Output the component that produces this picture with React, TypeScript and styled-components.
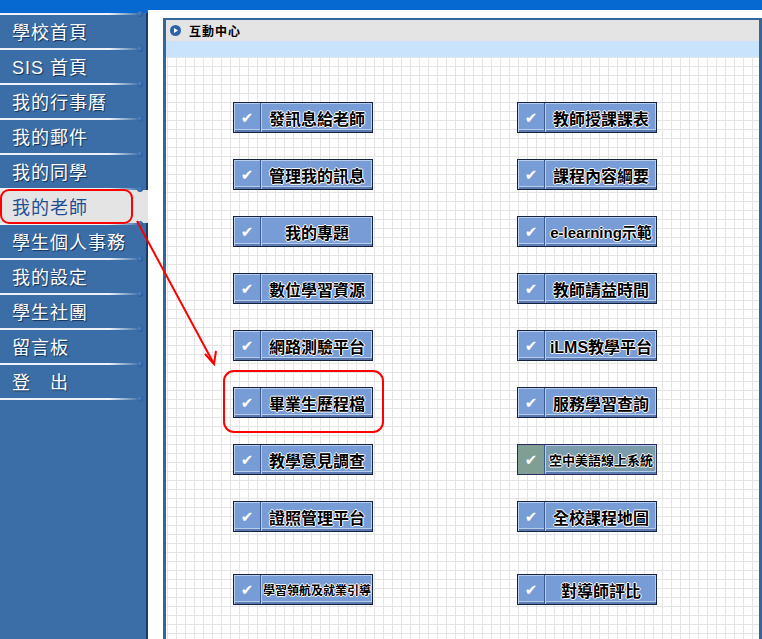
import React from "react";
import styled, { createGlobalStyle } from "styled-components";

const GlobalStyle = createGlobalStyle`
  html, body {
    margin: 0;
    padding: 0;
    background: #fff;
  }
  body {
    font-family: "Liberation Sans", "Noto Sans CJK TC", sans-serif;
  }
`;

const Page = styled.div`
  position: relative;
  width: 762px;
  height: 639px;
  overflow: hidden;
  display: flex;
  flex-direction: column;
`;
const TopBar = styled.div`
  height: 10px;
  flex-shrink: 0;
  background: #0668d1;
`;
const Body = styled.div`
  display: flex;
  flex: 1;
  min-height: 0;
`;
const Sidebar = styled.nav`
  width: 148px;
  flex-shrink: 0;
  padding-top: 3px;
  background: linear-gradient(#0668d1, #0668d1) top / 100% 3px no-repeat,
    linear-gradient(to left, #173c6c 0, #173c6c 2px, #3b6ea6 2px);
`;
const Divider = styled.div`
  position: relative;
  width: 140px;
  height: 2px;
  background: linear-gradient(to right, #eef3fa 0, #eef3fa 78%, #3b6ea6 100%);
  &::after {
    content: "";
    position: absolute;
    right: -3px;
    top: -2px;
    width: 6px;
    height: 6px;
    border-radius: 50%;
    background: radial-gradient(circle at 40% 40%, #4d87c9, #1b4a88);
  }
`;
const Item = styled.div<{ $active?: boolean }>`
  box-sizing: border-box;
  height: 33px;
  display: flex;
  align-items: center;
  padding: 0 0 2px 12px;
  font-size: 18px;
  letter-spacing: 1px;
  white-space: pre;
  color: ${(p) => (p.$active ? "#1f4f93" : "#fff")};
  background: ${(p) => (p.$active ? "#e4e4e4" : "transparent")};
  text-shadow: ${(p) => (p.$active ? "none" : "1px 1px 1px #12315a")};
`;

const Main = styled.main`
  flex: 1;
  min-width: 0;
  padding: 8px 0 0 15px;
`;
const Panel = styled.section`
  height: 100%;
  box-sizing: border-box;
  border: 3px solid #336699;
  border-top-width: 2px;
  border-bottom: none;
  display: flex;
  flex-direction: column;
`;
const PanelHeader = styled.header`
  height: 21px;
  flex-shrink: 0;
  display: flex;
  align-items: center;
  gap: 8px;
  padding-left: 4px;
  background: #e4e4e4;
  font-size: 12px;
  font-weight: bold;
  letter-spacing: 1px;
  color: #000;
`;
const SubHeader = styled.div`
  height: 16px;
  flex-shrink: 0;
  background: #c9e3fd;
`;
const GridArea = styled.div`
  flex: 1;
  padding: 45px 0 0 67px;
  background-color: #fff;
  background-image: linear-gradient(to right, #e4e4e4 1px, transparent 1px),
    linear-gradient(to bottom, #e4e4e4 1px, transparent 1px);
  background-size: 9px 9px;
  background-position: 1px 0;
  display: grid;
  grid-template-columns: 140px 140px;
  grid-auto-rows: min-content;
  column-gap: 144px;
  row-gap: 26px;
  align-content: start;
`;
const Btn = styled.button<{ $alt?: boolean; $late?: boolean }>`
  all: unset;
  box-sizing: border-box;
  width: 140px;
  height: 31px;
  display: flex;
  cursor: pointer;
  margin-top: ${(p) => (p.$late ? "16px" : "0")};
  border: 1px solid ${(p) => (p.$alt ? "#2b2a5c" : "#16233f")};
  background: ${(p) => (p.$alt ? "#7b9cab" : "#789dd6")};
  box-shadow: inset 1px 1px 0 #b8ccee, inset 0 -2px 0 #5b7bb0,
    inset 0 -3px 0 #b8ccee, inset -1px 0 0 #b8ccee;
`;
const CheckCell = styled.span<{ $alt?: boolean }>`
  width: 26px;
  flex-shrink: 0;
  display: flex;
  align-items: center;
  justify-content: center;
  border-right: 1px solid #3d5b8e;
  box-shadow: 1px 0 0 #b8ccee;
  background: ${(p) => (p.$alt ? "#7f9f95" : "transparent")};
  color: #fff;
  font-family: "DejaVu Sans", sans-serif;
  font-size: 15px;
  font-weight: bold;
  font-style: italic;
`;
const Label = styled.span<{ $size: number }>`
  flex: 1;
  display: flex;
  align-items: center;
  justify-content: center;
  padding-left: 1px;
  font-size: ${(p) => p.$size}px;
  font-weight: bold;
  white-space: nowrap;
  color: #000;
  text-shadow: 1px 0 0 #fff, -1px 0 0 #fff, 0 1px 0 #fff, 0 -1px 0 #fff;
`;
const Overlay = styled.svg`
  position: absolute;
  left: 0;
  top: 0;
  pointer-events: none;
`;

const menu = [
  "學校首頁",
  "SIS 首頁",
  "我的行事曆",
  "我的郵件",
  "我的同學",
  "我的老師",
  "學生個人事務",
  "我的設定",
  "學生社團",
  "留言板",
  "登　出",
];

type Entry = { label: string; size?: number; alt?: boolean };
const buttons: Entry[] = [
  { label: "發訊息給老師" },
  { label: "教師授課課表" },
  { label: "管理我的訊息" },
  { label: "課程內容綱要" },
  { label: "我的專題" },
  { label: "e-learning示範", size: 15 },
  { label: "數位學習資源" },
  { label: "教師請益時間" },
  { label: "網路測驗平台" },
  { label: "iLMS教學平台" },
  { label: "畢業生歷程檔" },
  { label: "服務學習查詢" },
  { label: "教學意見調查" },
  { label: "空中美語線上系統", size: 13, alt: true },
  { label: "證照管理平台" },
  { label: "全校課程地圖" },
  { label: "學習領航及就業引導", size: 12 },
  { label: "對導師評比" },
];

function PlayIcon() {
  return (
    <svg width="11" height="11" viewBox="0 0 11 11">
      <circle cx="5.5" cy="5.5" r="5.5" fill="#2e63a8" />
      <path d="M4 3 L8 5.5 L4 8 Z" fill="#fff" />
    </svg>
  );
}

export default function App() {
  return (
    <Page>
      <GlobalStyle />
      <TopBar />
      <Body>
        <Sidebar>
          <Divider />
          {menu.map((m) => (
            <React.Fragment key={m}>
              <Item $active={m === "我的老師"}>{m}</Item>
              <Divider />
            </React.Fragment>
          ))}
        </Sidebar>
        <Main>
          <Panel>
            <PanelHeader>
              <PlayIcon />
              互動中心
            </PanelHeader>
            <SubHeader />
            <GridArea>
              {buttons.map((b, i) => (
                <Btn key={b.label} $alt={b.alt} $late={i >= 16}>
                  <CheckCell $alt={b.alt}>✔</CheckCell>
                  <Label $size={b.size ?? 16}>{b.label}</Label>
                </Btn>
              ))}
            </GridArea>
          </Panel>
        </Main>
      </Body>
      <Overlay width="762" height="639" viewBox="0 0 762 639">
        <rect x="1" y="190" width="131" height="33" rx="8" fill="none" stroke="#f00" strokeWidth="2" />
        <rect x="224" y="371" width="159" height="61" rx="10" fill="none" stroke="#f00" strokeWidth="2" />
        <line x1="137" y1="221" x2="214" y2="364" stroke="#f00" strokeWidth="2" />
        <polyline points="205,354 214,364 216,351" fill="none" stroke="#f00" strokeWidth="2" />
      </Overlay>
    </Page>
  );
}
